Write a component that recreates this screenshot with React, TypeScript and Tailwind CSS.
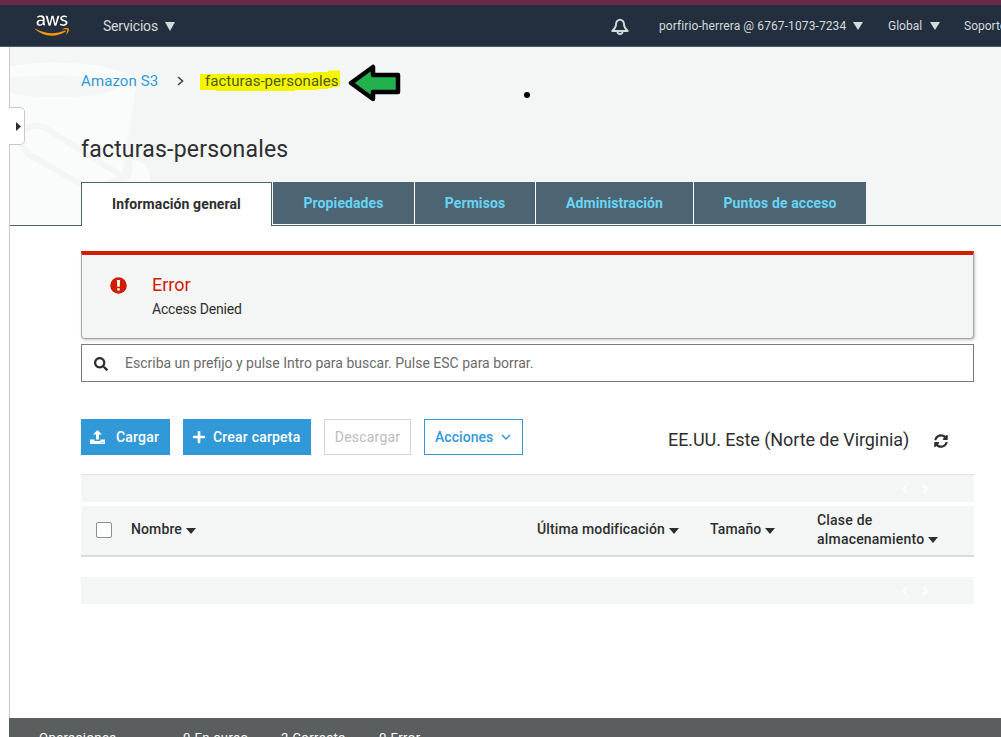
import type { ReactNode } from "react";
import { FaAws, FaSearch, FaPlus, FaSyncAlt } from "react-icons/fa";

function Caret({ className }: { className: string }) {
  return (
    <svg viewBox="0 0 10 8" preserveAspectRatio="none" className={`shrink-0 ${className}`} fill="currentColor">
      <path d="M0 0h10L5 8z" />
    </svg>
  );
}

function Chevron({ className, d }: { className: string; d: string }) {
  return (
    <svg viewBox="0 0 10 10" className={className} fill="none" stroke="currentColor" strokeWidth="1.5">
      <path d={d} />
    </svg>
  );
}

function TopBar() {
  return (
    <header className="relative flex h-[47px] shrink-0 items-center border-t-[5px] border-b border-t-[#652d4a] border-b-[#4d5563] bg-[#232f3e] text-[#d5dbdb]">
      <div className="relative ml-[35px] h-[27px] w-[34px] shrink-0">
        <FaAws className="absolute inset-0 h-[27px] w-[34px] text-white [clip-path:inset(0_0_11px_0)]" />
        <FaAws className="absolute inset-0 h-[27px] w-[34px] text-[#ff9900] [clip-path:inset(16px_0_0_0)]" />
      </div>
      <span className="mt-[2px] ml-[34px] w-[55px] shrink-0 text-[14px] tracking-[-0.2px] whitespace-nowrap">Servicios</span>
      <Caret className="mt-[2px] ml-[7px] h-[9px] w-[10px]" />
      <svg viewBox="0 0 18 18" className="mt-[3px] ml-[436px] h-[18px] w-[18px] shrink-0" fill="none" stroke="currentColor" strokeWidth="1.9">
        <path d="M9 1.600C6.300 2 5 4 5 6.500c0 3-1.500 4.500-3.700 6.500h15.400C14.500 11 13 9.500 13 6.500 13 4 11.700 2 9 1.600z" strokeLinejoin="round" />
        <path d="M6.500 13.500a2.500 2.500 0 0 0 5 0" />
      </svg>
      <span className="mt-px ml-[30px] w-[187px] shrink-0 text-[12px] tracking-[0.1px] whitespace-nowrap">porfirio-herrera @ 6767-1073-7234</span>
      <Caret className="mt-px ml-[7px] h-[8px] w-[10px]" />
      <span className="mt-px ml-[25px] w-[35px] shrink-0 text-[12px] whitespace-nowrap">Global</span>
      <Caret className="mt-px ml-[7px] h-[8px] w-[10px]" />
      <span className="mt-px ml-[24px] shrink-0 text-[12px] whitespace-nowrap">Soporte</span>
    </header>
  );
}

function Bucket() {
  return (
    <svg className="absolute top-0 left-0 h-[178px] w-[160px]" viewBox="10 47 160 178">
      <path d="M10 66Q40 61 70 63Q137 67 136 88L122 176L81 187V225H10z" fill="#fafcfb" />
      <path d="M10 78Q40 74 80 76Q120 79 118 87Q112 96 62 97Q30 98 10 93z" fill="#f4f7f6" />
      <path d="M82 185L30 155Q16 143 21 134Q31 121 47 129L122 176" fill="none" stroke="#f4f6f6" strokeWidth="6" />
      <path d="M132 159Q152 164 150 182H125Q136 175 132 159z" fill="#fafcfb" />
    </svg>
  );
}

const tabs = [
  { label: "Propiedades", box: "w-[142px]" },
  { label: "Permisos", box: "w-[121px]" },
  { label: "Administración", box: "w-[158px]" },
  { label: "Puntos de acceso", box: "w-[172px] border-r-0" },
];

function Hero() {
  return (
    <section className="relative flex h-[179px] shrink-0 flex-col bg-[#f4f6f6] pl-[71px]">
      <Bucket />
      <nav className="relative mt-[24px] flex h-[20px] items-center text-[15px] whitespace-nowrap">
        <a className="w-[77px] tracking-[0.1px] text-[#3299d9]">Amazon S3</a>
        <svg viewBox="0 0 7 10" className="ml-[19px] h-[10px] w-[7px]" fill="none" stroke="#444" strokeWidth="1.6">
          <path d="M1 1l4.500 4L1 9" />
        </svg>
        <span className="relative ml-[21px] w-[133px] tracking-[0.04px] text-[#4e5c10]">
          <svg viewBox="200 70 140 24" className="absolute -top-[1px] -left-[5px] h-[24px] w-[140px]" fill="#f5f500">
            <path d="M200 75H295V74H313V73H328V71.500H340V87H338V88H333V89H328V90H317V91H295V92H216V91H200z" />
          </svg>
          <span className="relative">facturas-personales</span>
        </span>
        <svg viewBox="0 0 54 38" className="mt-[3px] ml-[10px] h-[38px] w-[54px] shrink-0">
          <path d="M3 19L25 3V11H50V28H25V35z" fill="#22b14c" stroke="#000" strokeWidth="4.500" strokeLinejoin="round" />
        </svg>
        <span className="mt-[28px] ml-[122px] h-[6px] w-[6px] rounded-full bg-black" />
      </nav>
      <h1 className="relative mt-[43px] h-[30px] text-[23px] leading-[32px] tracking-[0.2px] whitespace-nowrap text-[#2d2e2f]">facturas-personales</h1>
      <div className="relative mt-auto -ml-[71px] flex h-[44px] shrink-0 items-stretch">
        <span className="w-[71px] border-b border-[#4d6472]" />
        <a className="flex w-[191px] items-center justify-center border border-b-0 border-[#4d6472] bg-white text-[14px] font-bold tracking-[0.1px] text-[#2d2e2f]">Información general</a>
        <div className="flex grow border-b border-[#4d6472] pl-px">
          {tabs.map((t) => (
            <a key={t.label} className={`flex items-center justify-center border-r border-b border-white bg-[#4d6472] text-[14px] font-bold tracking-[0.1px] whitespace-nowrap text-[#69d4f3] ${t.box}`}>
              {t.label}
            </a>
          ))}
        </div>
      </div>
    </section>
  );
}

function ErrorBox() {
  return (
    <div className="flex h-[88px] rounded-b-[4px] border border-t-4 border-[#a3a7a7] border-t-[#d11c00] bg-[#f4f6f6] pl-[28px] shadow-[1px_1px_3px_rgba(0,0,0,0.25)]">
      <svg viewBox="0 0 17 17" className="mt-[22px] h-[17px] w-[17px]">
        <circle cx="8.500" cy="8.500" r="8.300" fill="#d11c00" />
        <path d="M6.900 3h3.200L9.700 9.700H7.300zM7.200 11.200h2.600v2.400H7.200z" fill="#fff" />
      </svg>
      <div className="ml-[25px]">
        <h2 className="mt-[20px] text-[18px] leading-[20px] text-[#d11c00]">Error</h2>
        <p className="mt-[4px] text-[14px] leading-[20px] tracking-[-0.2px] text-[#2d2e2f]">Access Denied</p>
      </div>
    </div>
  );
}

function Toolbar() {
  return (
    <div className="mt-[37px] flex h-[36px] text-[14px] font-medium tracking-[0.2px] whitespace-nowrap">
      <button className="flex w-[89px] items-center bg-[#3299d9] pl-[9px] text-white">
        <svg viewBox="0 0 15 14" className="h-[14px] w-[15px]" fill="currentColor">
          <path d="M7.500 0L12 4.500H9V9.500H6V4.500H3z" />
          <path d="M0 9.500h4.500V11h6V9.500H15V14H0z" />
          <path d="M10.500 12h1v1h-1zM12.500 12h1v1h-1z" fill="#3299d9" />
        </svg>
        <span className="ml-[11px]">Cargar</span>
      </button>
      <button className="ml-[13px] flex w-[128px] items-center bg-[#3299d9] pl-[9px] text-white">
        <FaPlus className="h-[14px] w-[14px]" />
        <span className="ml-[7px]">Crear carpeta</span>
      </button>
      <button className="ml-[13px] flex w-[87px] items-center justify-center border border-[#d5d5d5] font-normal text-[#bcbcbc]">Descargar</button>
      <button className="ml-[13px] flex w-[99px] items-center border border-[#3299d9] pl-[10px] tracking-[0.05px] text-[#3299d9]">
        Acciones
        <Chevron className="ml-[8px] h-[10px] w-[10px]" d="M1 3l4 4 4-4" />
      </button>
      <div className="mt-[5px] ml-[145px] flex w-[242px] items-center text-[18px] font-normal tracking-[-0.08px] text-[#2d2e2f]">EE.UU. Este (Norte de Virginia)</div>
      <FaSyncAlt className="mt-[15px] ml-[24px] h-[14px] w-[14px] text-[#2d2e2f]" />
    </div>
  );
}

function Pager({ className }: { className: string }) {
  return (
    <div className={`flex shrink-0 items-center bg-[#f4f6f6] pl-[819px] text-[#ffffff] ${className}`}>
      <Chevron className="h-[10px] w-[10px]" d="M7 1L3 5l4 4" />
      <Chevron className="ml-[10px] h-[10px] w-[10px]" d="M3 1l4 4-4 4" />
    </div>
  );
}

function Column({ children, className }: { children: ReactNode; className: string }) {
  return (
    <div className={`flex shrink-0 items-center whitespace-nowrap ${className}`}>
      <span>{children}</span>
      <Caret className="mt-[2px] ml-[4px] h-[6px] w-[10px]" />
    </div>
  );
}

function ObjectTable() {
  return (
    <div className="mt-[19px] flex flex-col">
      <Pager className="h-[28px] border-t border-[#e1e4e4]" />
      <div className="mt-[4px] flex h-[51px] items-center border-b-2 border-[#dadcdc] bg-[#f4f6f6] pb-[2px] pl-[15px] text-[14px] font-medium tracking-[0.12px] text-[#2d2e2f]">
        <span className="h-[16px] w-[16px] shrink-0 rounded-[2px] border border-[#879191] bg-white" />
        <Column className="ml-[19px] w-[406px]">Nombre</Column>
        <Column className="w-[173px]">Última modificación</Column>
        <Column className="w-[107px]">Tamaño</Column>
        <div className="leading-[19px] tracking-[0.2px] whitespace-nowrap">
          <div>Clase de</div>
          <Column className="">almacenamiento</Column>
        </div>
      </div>
      <Pager className="mt-[20px] h-[27px]" />
    </div>
  );
}

export default function App() {
  return (
    <div className="flex h-[737px] w-[1001px] flex-col overflow-hidden bg-white font-['Roboto',sans-serif]">
      <TopBar />
      <div className="relative ml-[9px] flex h-[671px] shrink-0 flex-col border-l border-[#c9c9c9]">
        <Hero />
        <main className="mt-[25px] ml-[71px] w-[893px]">
          <ErrorBox />
          <div className="mt-[5px] flex h-[38px] items-center border border-[#7b7b7b] pl-[12px] text-[14px] text-[#6b6b6b]">
            <FaSearch className="mt-[2px] h-[14px] w-[14px] text-[#2d2e2f]" />
            <span className="ml-[17px] whitespace-nowrap">Escriba un prefijo y pulse Intro para buscar. Pulse ESC para borrar.</span>
          </div>
          <Toolbar />
          <ObjectTable />
        </main>
        <div className="absolute top-[60px] -left-px flex h-[38px] w-[16px] items-center rounded-r-[5px] border border-l-0 border-[#c9c9c9] bg-white pl-[7px]">
          <svg viewBox="0 0 5 9" className="h-[9px] w-[5px]" fill="#2d2e2f">
            <path d="M0 0l5 4.500L0 9z" />
          </svg>
        </div>
      </div>
      <footer className="ml-[9px] flex h-[19px] shrink-0 items-start overflow-hidden bg-[#5a5e5e] pt-[11px] pl-[30px] text-[13px] leading-[18px] tracking-[0.45px] whitespace-nowrap text-white">
        <span className="w-[144px]">Operaciones</span>
        <span className="w-[98px]">0 En curso</span>
        <span className="w-[98px]">2 Correcto</span>
        <span>0 Error</span>
      </footer>
    </div>
  );
}
